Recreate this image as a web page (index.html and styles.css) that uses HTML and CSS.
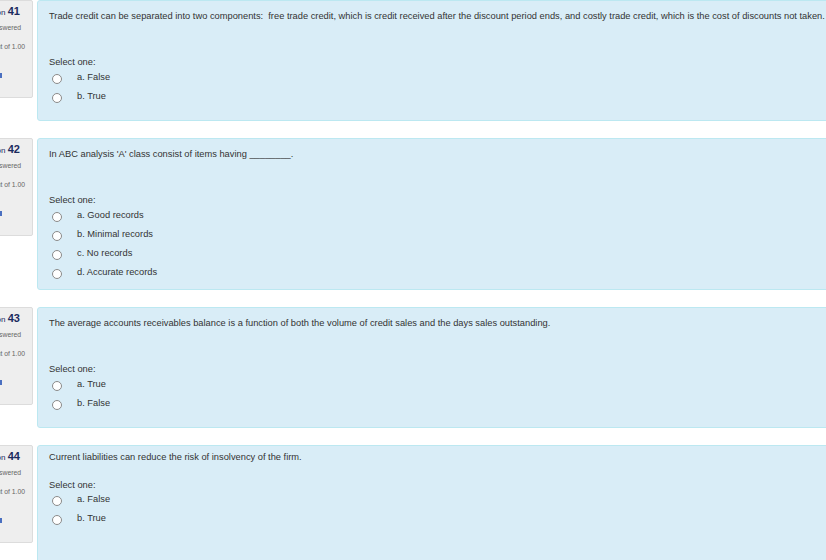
FILE: index.html
```html
<!DOCTYPE html>
<html>
    <head>
        <meta charset="utf-8">
        <title>Quiz attempt</title>
        <meta name="viewport" content="width=device-width, initial-scale=1.0">
        <link rel="stylesheet" href="styles.css">
    </head>
    <body>
        <div class="page">
            <div class="que">
                <div class="info">
                    <h3 class="info__no">Question <span class="qno">41</span></h3>
                    <div class="info__state">Not answered</div>
                    <div class="info__grade">Marked out of 1.00</div>
                    <div class="info__flag"><span class="flag"></span></div>
                </div>
                <div class="content content--q41">
                    <div class="qtext">Trade credit can be separated into two components:&nbsp; free trade credit, which is credit received after the discount period ends, and costly trade credit, which is the cost of discounts not taken.</div>
                    <div class="prompt">Select one:</div>
                    <div class="answer">
                        <label class="opt"><span class="radio"></span>a. False</label>
                        <label class="opt"><span class="radio"></span>b. True</label>
                    </div>
                </div>
            </div>

            <div class="que">
                <div class="info">
                    <h3 class="info__no">Question <span class="qno">42</span></h3>
                    <div class="info__state">Not answered</div>
                    <div class="info__grade">Marked out of 1.00</div>
                    <div class="info__flag"><span class="flag"></span></div>
                </div>
                <div class="content content--q42">
                    <div class="qtext">In ABC analysis 'A' class consist of items having ________.</div>
                    <div class="prompt">Select one:</div>
                    <div class="answer">
                        <label class="opt"><span class="radio"></span>a. Good records</label>
                        <label class="opt"><span class="radio"></span>b. Minimal records</label>
                        <label class="opt"><span class="radio"></span>c. No records</label>
                        <label class="opt"><span class="radio"></span>d. Accurate records</label>
                    </div>
                </div>
            </div>

            <div class="que">
                <div class="info">
                    <h3 class="info__no">Question <span class="qno">43</span></h3>
                    <div class="info__state">Not answered</div>
                    <div class="info__grade">Marked out of 1.00</div>
                    <div class="info__flag"><span class="flag"></span></div>
                </div>
                <div class="content content--q43">
                    <div class="qtext">The average accounts receivables balance is a function of both the volume of credit sales and the days sales outstanding.</div>
                    <div class="prompt">Select one:</div>
                    <div class="answer">
                        <label class="opt"><span class="radio"></span>a. True</label>
                        <label class="opt"><span class="radio"></span>b. False</label>
                    </div>
                </div>
            </div>

            <div class="que">
                <div class="info">
                    <h3 class="info__no">Question <span class="qno">44</span></h3>
                    <div class="info__state">Not answered</div>
                    <div class="info__grade">Marked out of 1.00</div>
                    <div class="info__flag"><span class="flag"></span></div>
                </div>
                <div class="content content--q44">
                    <div class="qtext">Current liabilities can reduce the risk of insolvency of the firm.</div>
                    <div class="prompt">Select one:</div>
                    <div class="answer">
                        <label class="opt"><span class="radio"></span>a. False</label>
                        <label class="opt"><span class="radio"></span>b. True</label>
                    </div>
                </div>
            </div>
        </div>
    </body>
</html>
```

FILE: styles.css
```css
:root {
    --font-main: 'Liberation Sans', Arial, Helvetica, sans-serif;

    --color-text: #333;
    --color-muted: #666;
    --color-navy: #1b2a5e;
    --color-info-bg: #eeeeee;
    --color-info-border: #dcdcdc;
    --color-box-bg: #d9edf7;
    --color-box-border: #bce8f1;
}
html, body {
    margin: 0;
    padding: 0;
    overflow: hidden;
    background: #fff;
}
body {
    font-family: var(--font-main);
    color: var(--color-text);
    width: 826px;
    height: 560px;
}
.page {
    width: 1000px;
    margin-left: -78px;
}
.que {
    display: flex;
    align-items: flex-start;
    gap: 4px;
    margin-bottom: 17px;
}
.info {
    box-sizing: border-box;
    width: 111px;
    height: 98px;
    padding: 3px 12px 0 0;
    background: var(--color-info-bg);
    border: 1px solid var(--color-info-border);
    border-radius: 2px;
    text-align: right;
    overflow: hidden;
    white-space: nowrap;
}
.info__no {
    margin: 0;
    font-size: 8px;
    font-weight: normal;
    line-height: 14px;
    height: 14px;
    color: var(--color-navy);
}
.qno {
    font-size: 11px;
    font-weight: bold;
    line-height: 14px;
}
.info__state,
.info__grade {
    font-size: 6.8px;
    color: var(--color-muted);
    line-height: 9px;
    height: 9px;
}
.info__state {
    margin-top: 5px;
    margin-right: -1px;
}
.info__grade {
    margin-top: 10px;
    margin-right: -5px;
}
.info__flag {
    margin-top: 22px;
    height: 5px;
    line-height: 5px;
}
.flag {
    display: inline-block;
    vertical-align: top;
    width: 2px;
    height: 5px;
    margin-right: 18px;
    background: #4a6fc0;
}
.content {
    box-sizing: border-box;
    flex: 1;
    padding: 10px 11px 0 11px;
    background: var(--color-box-bg);
    border: 1px solid var(--color-box-border);
    border-radius: 3px;
    font-size: 9.3px;
    line-height: 11px;
}
.content--q41 { height: 121px; }
.content--q42 { height: 152px; }
.content--q43 { height: 121px; }
.content--q44 { height: 130px; }
.qtext {
    white-space: nowrap;
}
.prompt {
    margin-top: 35px;
}
.answer {
    margin-top: 0;
}
.content--q44 .qtext {
    margin-top: -4px;
}
.content--q44 .prompt {
    margin-top: 17px;
}
.content--q44 .answer {
    margin-top: -1px;
}
.opt {
    display: flex;
    align-items: center;
    height: 19px;
    padding-left: 3px;
}
.radio {
    box-sizing: border-box;
    width: 10px;
    height: 10px;
    margin-right: 15px;
    border: 1px solid #8a8a8a;
    border-radius: 50%;
    background: #fff;
    margin-top: 2px;
}
```
